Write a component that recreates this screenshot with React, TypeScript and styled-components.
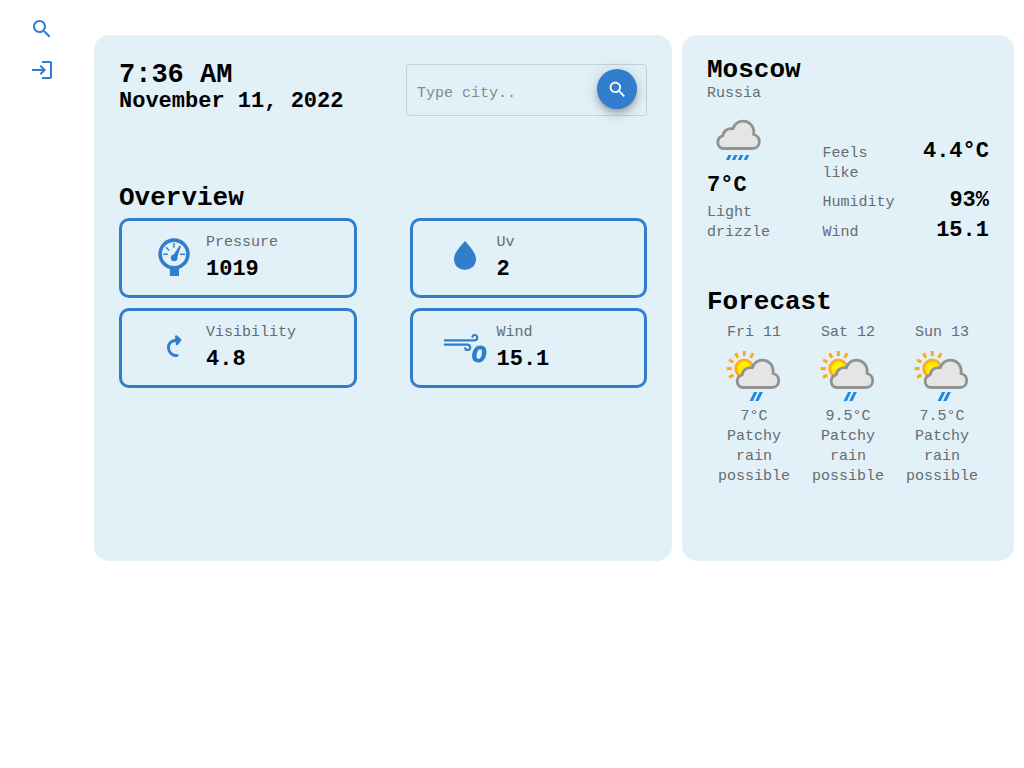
import React from "react";
import styled, { createGlobalStyle } from "styled-components";

const BLUE = "#317ecd";
const PANEL = "#e2f1f8";
const MUTED = "#666c6f";

const GlobalStyle = createGlobalStyle`
  * { box-sizing: border-box; }
  body {
    margin: 0;
    background: #fff;
    color: #000;
    font-family: "Liberation Mono", "DejaVu Sans Mono", monospace;
    font-size: 15px;
    line-height: 20px;
  }
  h1, h2, p, dl, dt, dd, ul { margin: 0; padding: 0; }
  ul { list-style: none; }
  svg { display: block; }
`;

const Page = styled.div`
  display: grid;
  grid-template-columns: 84px minmax(0, 1fr);
`;

const Sidebar = styled.nav`
  display: flex;
  flex-direction: column;
  align-items: center;
  gap: 17px;
  padding-top: 17px;
`;

const NavLink = styled.a`
  color: ${BLUE};
`;

const Main = styled.main`
  display: grid;
  grid-template-columns: minmax(0, 1fr) 332px;
  gap: 10px;
  padding: 35px 10px 10px;
`;

const Panel = styled.section`
  background: ${PANEL};
  border-radius: 15px;
  padding: 24px 25px 74px;
`;

const Header = styled.header`
  display: flex;
  justify-content: space-between;
  align-items: flex-start;
  padding-top: 2px;
  margin-bottom: 66px;
`;

const Clock = styled.p`
  font-size: 27px;
  line-height: 28px;
  font-weight: 700;
`;

const DateText = styled.p`
  font-size: 22px;
  line-height: 26px;
  font-weight: 700;
`;

const SearchBox = styled.form`
  display: flex;
  align-items: flex-start;
  width: 241px;
  height: 52px;
  margin-top: 3px;
  padding: 4px 9px 4px 10px;
  border: 1px solid #c3d0d6;
  border-radius: 4px;
`;

const SearchInput = styled.input`
  flex: 1;
  min-width: 0;
  height: 42px;
  padding: 7px 0 0;
  border: 0;
  outline: 0;
  background: transparent;
  font: inherit;
  &::placeholder { color: #83898c; opacity: 1; }
`;

const RoundButton = styled.button`
  display: flex;
  align-items: center;
  justify-content: center;
  width: 40px;
  height: 40px;
  padding: 0;
  border: 0;
  border-radius: 50%;
  background: ${BLUE};
  color: #fff;
  box-shadow: 0 3px 5px -1px rgba(0, 0, 0, 0.2), 0 6px 10px rgba(0, 0, 0, 0.14),
    0 1px 18px rgba(0, 0, 0, 0.12);
`;

const Title = styled.h2<{ $city?: boolean }>`
  font-size: 26px;
  line-height: ${(p) => (p.$city ? "22px" : "32px")};
  margin-bottom: ${(p) => (p.$city ? "3px" : "0")};
  font-weight: 700;
`;

const CardGrid = styled.div`
  display: grid;
  grid-template-columns: 1fr 1fr;
  gap: 10px 53px;
  margin-top: 4px;
`;

const Card = styled.article`
  display: flex;
  align-items: center;
  gap: 10px;
  height: 80px;
  padding-left: 30px;
  border: 3px solid ${BLUE};
  border-radius: 10px;
  color: ${BLUE};
`;

const Label = styled.p`
  color: ${MUTED};
`;

const Value = styled.p`
  color: #000;
  font-size: 22px;
  line-height: 26px;
  font-weight: 700;
`;

const CardText = styled.div`
  display: grid;
  gap: 4px;
`;

const Current = styled.div`
  display: grid;
  grid-template-columns: 41% 59%;
  align-items: start;
  margin: 4px 0 42px;
`;

const Conditions = styled.div`
  padding-right: 20px;
  ${Value} { margin: 1px 0 4px; }
`;

const Details = styled.dl`
  display: grid;
  gap: 4px;
  padding-top: 31px;
`;

const Detail = styled.div`
  display: grid;
  grid-template-columns: 1fr 1fr;
  dt { color: ${MUTED}; padding-top: 5px; }
  dd { font-size: 22px; line-height: 26px; font-weight: 700; text-align: right; }
`;

const ForecastList = styled.ul`
  display: grid;
  grid-template-columns: repeat(3, 1fr);
  margin-top: 5px;
  color: ${MUTED};
  text-align: center;
`;

const Day = styled.li`
  display: flex;
  flex-direction: column;
  align-items: center;
  padding: 0 10px;
`;

const SearchIcon = ({ size }: { size: number }) => (
  <svg width={size} height={size} viewBox="0 0 24 24" fill="currentColor" aria-hidden="true">
    <path d="M15.5 14h-.79l-.28-.27C15.41 12.59 16 11.11 16 9.5 16 5.91 13.09 3 9.5 3S3 5.91 3 9.5 5.91 16 9.5 16c1.61 0 3.09-.59 4.23-1.57l.27.28v.79l5 4.99L20.49 19l-4.99-5zm-6 0C7.01 14 5 11.99 5 9.5S7.01 5 9.5 5 14 7.01 14 9.5 11.99 14 9.5 14z" />
  </svg>
);

const LoginIcon = () => (
  <svg width="24" height="24" viewBox="0 0 24 24" fill="currentColor" aria-hidden="true">
    <path d="M11 7 9.6 8.4l2.6 2.6H2v2h10.2l-2.6 2.6L11 17l5-5-5-5zm9 12h-8v2h8c1.1 0 2-.9 2-2V5c0-1.1-.9-2-2-2h-8v2h8v14z" />
  </svg>
);

const icons = {
  gauge: (
    <>
      <circle cx="22" cy="18" r="13.9" fill="none" stroke="currentColor" strokeWidth="3.6" />
      <path d="M17.8 30h9.2v10h-9.2z" />
      <path d="M11.2 18.2h4.6M28 18.2h5M21.9 7v4.8M14 11.2l3.2 3.2" stroke="currentColor" strokeWidth="1.4" />
      <circle cx="22.2" cy="21.8" r="3.4" />
      <path d="M20.4 20.5 27.7 9.6l1.2.6-4.2 12.4z" />
    </>
  ),
  drop: <path d="M22 5C18.5 9.5 11 16 11 23.2 11 29.6 16 33.7 22 33.7s11-4.1 11-10.5C33 16 25.5 9.5 22 5z" />,
  turn: (
    <>
      <path d="M25.2 29.6C19.5 29.6 16.4 25.8 16.4 21.6C16.4 17 20 14.2 25 14.2" fill="none" stroke="currentColor" strokeWidth="2.9" strokeLinecap="round" />
      <path d="M24.2 10.4 28.2 14 25 18z" stroke="currentColor" strokeWidth="2.4" strokeLinejoin="round" />
    </>
  ),
  wind: (
    <>
      <path d="M1.8 14.4H31.2C35.2 14.4 35.2 9 31.7 9C30.3 9 29.5 9.8 29.5 10.8M1.8 18.7H24C28.2 18.7 28.2 24 24.6 24C23.2 24 22.3 23.3 22.3 22.2" fill="none" stroke="currentColor" strokeWidth="2.2" strokeLinecap="round" />
      <path
        fillRule="evenodd"
        d="M37.4 19.6C41.6 19.6 44 22.4 43.4 27.2C42.7 33 39.7 36.5 35.2 36.5C30.9 36.5 28.5 33.6 29.2 28.6C30 23 33 19.6 37.4 19.6zM37 23.2C35 23.2 34.1 25.5 33.7 28.6C33.3 31.5 33.6 33 35.5 33C37.5 33 38.5 30.7 38.9 27.6C39.3 24.6 38.9 23.2 37 23.2z"
      />
    </>
  ),
};

const MetricIcon = ({ name }: { name: keyof typeof icons }) => (
  <svg width="44" height="44" viewBox="0 0 44 44" fill="currentColor" overflow="visible" aria-hidden="true">
    {icons[name]}
  </svg>
);

const Cloud = () => (
  <path
    d="M21 45.5C17.4 45.5 15.2 42.8 15.2 39.6C15.2 36.2 17.3 33.6 20.2 32.9C20.5 28.5 24.5 24.9 30.3 25.8C32 21 36 18.2 40.5 18.2C46.5 18.2 51 22.8 51.2 28.5L51 31.5C54.5 32.5 56.7 35 56.7 38.5C56.7 42.5 54 45.5 50 45.5Z"
    fill="#e6e5e6"
    stroke="#929292"
    strokeWidth="2.8"
    strokeLinejoin="round"
  />
);

const DrizzleIcon = () => (
  <svg width="64" height="64" viewBox="0 0 64 64" role="img" aria-label="Light drizzle">
    <g transform="translate(-4.4 -5)"><Cloud /></g>
    {[19, 24.9, 30.8, 36.7].map((x) => (
      <path key={x} d={`M${x} 52l2.4-5h3.2l-2.4 5z`} fill="#1e88e5" />
    ))}
  </svg>
);

const SunRainIcon = () => (
  <svg width="64" height="64" viewBox="0 1 64 64" role="img" aria-label="Patchy rain possible">
    {[-120, -90, -60, -30, 0, 30].map((angle) => (
      <path key={angle} d="M22.3 9v5" stroke="#ffa91a" strokeWidth="3" transform={`rotate(${angle} 22.3 26.6)`} />
    ))}
    <circle cx="22.3" cy="26.6" r="8.6" fill="#ffee00" stroke="#ffae17" strokeWidth="2.9" />
    <Cloud />
    <path d="M27.6 59l4.4-9h3.3l-4.4 9zM33.2 59l4.4-9h3.3l-4.4 9z" fill="#1e88e5" />
  </svg>
);

const metrics: { icon: keyof typeof icons; label: string; value: string }[] = [
  { icon: "gauge", label: "Pressure", value: "1019" },
  { icon: "drop", label: "Uv", value: "2" },
  { icon: "turn", label: "Visibility", value: "4.8" },
  { icon: "wind", label: "Wind", value: "15.1" },
];

const details = [
  ["Feels like", "4.4°C"],
  ["Humidity", "93%"],
  ["Wind", "15.1"],
];

const forecast = [
  ["Fri 11", "7°C"],
  ["Sat 12", "9.5°C"],
  ["Sun 13", "7.5°C"],
];

export default function App() {
  return (
    <Page>
      <GlobalStyle />
      <Sidebar aria-label="Main">
        <NavLink href="#search" aria-label="Search"><SearchIcon size={24} /></NavLink>
        <NavLink href="#login" aria-label="Log in"><LoginIcon /></NavLink>
      </Sidebar>
      <Main>
        <Panel>
          <Header>
            <div>
              <Clock>7:36 AM</Clock>
              <DateText>November 11, 2022</DateText>
            </div>
            <SearchBox role="search" onSubmit={(e) => e.preventDefault()}>
              <SearchInput aria-label="City" placeholder="Type city.." />
              <RoundButton type="submit" aria-label="Search city"><SearchIcon size={21} /></RoundButton>
            </SearchBox>
          </Header>
          <Title>Overview</Title>
          <CardGrid>
            {metrics.map((m) => (
              <Card key={m.label}>
                <MetricIcon name={m.icon} />
                <CardText>
                  <Label>{m.label}</Label>
                  <Value>{m.value}</Value>
                </CardText>
              </Card>
            ))}
          </CardGrid>
        </Panel>
        <Panel>
          <Title as="h1" $city>Moscow</Title>
          <Label>Russia</Label>
          <Current>
            <Conditions>
              <DrizzleIcon />
              <Value>7°C</Value>
              <Label>Light drizzle</Label>
            </Conditions>
            <Details>
              {details.map(([label, value]) => (
                <Detail key={label}>
                  <dt>{label}</dt>
                  <dd>{value}</dd>
                </Detail>
              ))}
            </Details>
          </Current>
          <Title>Forecast</Title>
          <ForecastList>
            {forecast.map(([day, temp]) => (
              <Day key={day}>
                <p>{day}</p>
                <SunRainIcon />
                <p>{temp}</p>
                <p>Patchy rain possible</p>
              </Day>
            ))}
          </ForecastList>
        </Panel>
      </Main>
    </Page>
  );
}
